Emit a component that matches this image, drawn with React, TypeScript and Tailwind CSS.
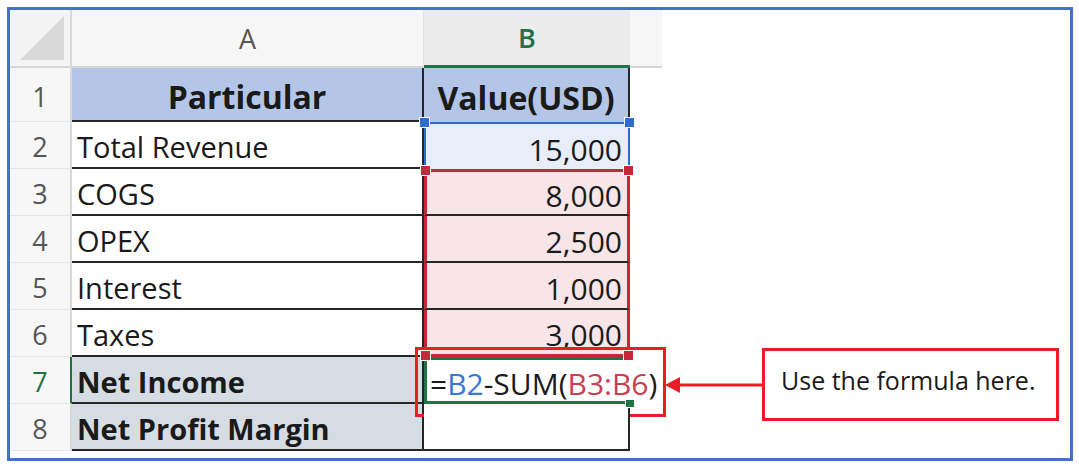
/**
 * Excel sheet screenshot — net income formula with range highlights and a callout.
 */
const FONT = "font-['Open_Sans','Liberation_Sans',sans-serif]";

type Row = {
  n: number;
  label: string;
  value: string;
  bold?: boolean;
  aBg: string;
  b: string; // classes for the column B cell (fill + range borders)
  h: string;
};

const rows: Row[] = [
  {
    n: 1, label: "Particular", value: "Value(USD)", bold: true, aBg: "bg-[#b4c6e7]", h: "h-[54px]",
    b: "bg-[#b4c6e7] border-r-2 border-r-[#262626] justify-center font-bold text-[32px]",
  },
  {
    n: 2, label: "Total Revenue", value: "15,000", aBg: "bg-white", h: "h-[47px]",
    b: "bg-[#e8eef9] border-2 border-[#2f6dcb] border-b-0 justify-end pr-[6px]",
  },
  {
    n: 3, label: "COGS", value: "8,000", aBg: "bg-white", h: "h-[47px]",
    b: "bg-[#f8e5e8] border-x-[3px] border-t-[3px] border-[#c6283a] border-b-2 border-b-[#262626] justify-end pr-[5px]",
  },
  {
    n: 4, label: "OPEX", value: "2,500", aBg: "bg-white", h: "h-[47px]",
    b: "bg-[#f8e5e8] border-x-[3px] border-[#c6283a] border-b-2 border-b-[#262626] justify-end pr-[5px]",
  },
  {
    n: 5, label: "Interest", value: "1,000", aBg: "bg-white", h: "h-[47px]",
    b: "bg-[#f8e5e8] border-x-[3px] border-[#c6283a] border-b-2 border-b-[#262626] justify-end pr-[5px]",
  },
  {
    n: 6, label: "Taxes", value: "3,000", aBg: "bg-white", h: "h-[47px]",
    b: "bg-[#f8e5e8] border-x-[3px] border-b-[3px] border-[#c6283a] justify-end pr-[5px]",
  },
  {
    n: 7, label: "Net Income", value: "", bold: true, aBg: "bg-[#d6dce4]", h: "h-[47px]",
    b: "bg-white border-y-[3px] border-l-[3px] border-[#217346] pl-[3px] whitespace-nowrap",
  },
  {
    n: 8, label: "Net Profit Margin", value: "", bold: true, aBg: "bg-[#d6dce4]", h: "h-[47px]",
    b: "bg-white border-r-2 border-b-2 border-[#262626]",
  },
];

function Handle({ className }: { className: string }) {
  return <span className={`absolute z-10 h-[11px] w-[11px] border border-white ${className}`} />;
}

function HeaderRow() {
  return (
    <div className="flex h-[58px]">
      {/* select-all corner */}
      <div className="flex w-[62px] items-end justify-end border-r-2 border-b-2 border-[#d9d9d9] bg-[#f4f4f4] p-[6px]">
        <svg width="44" height="44" viewBox="0 0 44 44">
          <polygon points="44,0 44,44 0,44" fill="#d9d9d9" />
        </svg>
      </div>
      <div className="flex w-[352px] items-center justify-center border-r border-b-2 border-r-[#e3e3e3] border-b-[#d4d4d4] bg-[#f6f6f6] pt-[2px] text-[27px] text-[#555]">
        A
      </div>
      <div className="flex w-[206px] items-center justify-center border-b-[3px] border-[#217346] bg-[#ececec] pt-[2px] text-[27px] font-semibold text-[#217346]">
        B
      </div>
      <div className="w-[32px] border-b-2 border-[#d4d4d4] bg-[#f6f6f6]" />
    </div>
  );
}

function Formula() {
  return (
    <>
      <span>=</span>
      <span className="text-[#3b78d0]">B2</span>
      <span>-SUM(</span>
      <span className="text-[#c8404c]">B3:B6</span>
      <span>)</span>
      {/* fill handle */}
      <span className="absolute -right-[5px] -bottom-[7px] z-10 h-[9px] w-[10px] border border-white bg-[#217346]" />
      {/* red annotation frame round the active cell */}
      <span className="absolute -top-[13px] -left-[12px] h-[70px] w-[251px] border-[3px] border-[#ec1c24]" />
    </>
  );
}

function DataRow({ r }: { r: Row }) {
  const active = r.n === 7;
  return (
    <div className={`flex ${r.h}`}>
      <div
        className={`flex w-[62px] items-center justify-center border-b border-r-2 border-b-[#e6e6e6] bg-[#f7f7f7] pt-[5px] text-[27px] ${
          active ? "border-r-[#217346] text-[#217346]" : "border-r-[#d9d9d9] text-[#555]"
        }`}
      >
        {r.n}
      </div>
      <div
        className={`flex w-[352px] items-center border-r-2 border-b-2 border-[#262626] pt-[5px] ${r.aBg} ${
          r.n === 1 ? "justify-center text-[32px] font-bold" : r.bold ? "pl-[5px] text-[29px] font-bold" : "pl-[5px] text-[29px]"
        } text-[#1a1a1a]`}
      >
        {r.label}
      </div>
      <div className={`relative flex w-[206px] items-center pt-[5px] text-[30px] text-[#1a1a1a] ${r.b}`}>
        {active ? <Formula /> : r.value}
        {r.n === 2 && (
          <>
            <Handle className="-top-[7px] -left-[7px] bg-[#2f6dcb]" />
            <Handle className="-top-[7px] -right-[7px] bg-[#2f6dcb]" />
          </>
        )}
        {r.n === 3 && (
          <>
            <Handle className="-top-[7px] -left-[7px] bg-[#c6283a]" />
            <Handle className="-top-[7px] -right-[7px] bg-[#c6283a]" />
          </>
        )}
        {r.n === 6 && (
          <>
            <Handle className="-bottom-[7px] -left-[7px] bg-[#c6283a]" />
            <Handle className="-bottom-[7px] -right-[7px] bg-[#c6283a]" />
          </>
        )}
      </div>
    </div>
  );
}

function Callout() {
  return (
    <div className="flex flex-1 flex-col justify-end pb-[37px]">
      <div className="flex items-center">
        <svg width="97" height="18" viewBox="0 0 97 18" className="ml-[3px] shrink-0">
          <line x1="12" y1="9" x2="97" y2="9" stroke="#ec1c24" strokeWidth="3" />
          <polygon points="0,9 15,1 15,17" fill="#ec1c24" />
        </svg>
        <div className="flex h-[73px] w-[297px] shrink-0 items-center border-[3px] border-[#ec1c24] bg-white pb-[8px] pl-[16px] text-[25px] text-[#1a1a1a]">
          Use the formula here.
        </div>
      </div>
    </div>
  );
}

export default function App() {
  return (
    <div className={`h-[468px] w-[1079px] bg-white pt-[7px] pl-[7px] ${FONT}`}>
      <div className="flex h-[454px] w-[1066px] overflow-hidden border-[3px] border-[#4472c4] bg-white">
        <div className="flex shrink-0 flex-col">
          <HeaderRow />
          {rows.map((r) => (
            <DataRow key={r.n} r={r} />
          ))}
        </div>
        <Callout />
      </div>
    </div>
  );
}
